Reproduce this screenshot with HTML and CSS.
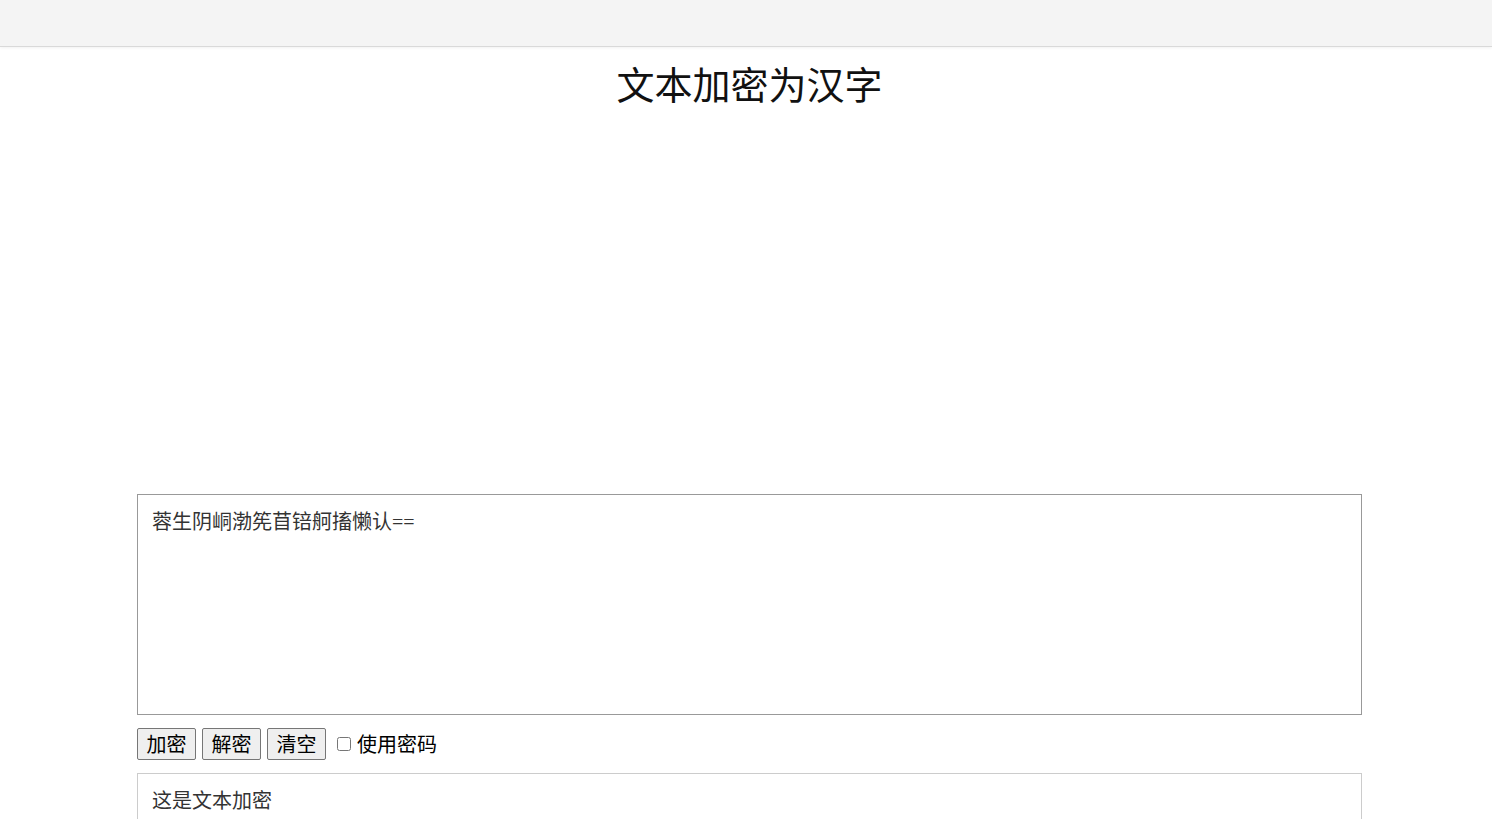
FILE: index.html
```html
<!DOCTYPE html>
<html lang="zh-CN">
<head>
<meta charset="utf-8">
<title>文本加密为汉字</title>
<link rel="stylesheet" href="styles.css">
</head>
<body>
<div class="topbar"></div>
<main class="page">
  <h1 class="title">文本加密为汉字</h1>
  <div class="ad-space"></div>
  <textarea class="input" spellcheck="false">蓉生阴峒渤筅苜锫舸搐懒认==</textarea>
  <div class="actions">
    <button class="btn" type="button">加密</button>
    <button class="btn" type="button">解密</button>
    <button class="btn" type="button">清空</button>
    <label class="pw"><input type="checkbox" class="pw-check">使用密码</label>
  </div>
  <div class="output">这是文本加密</div>
</main>
</body>
</html>
```

FILE: styles.css
```css
html, body {
  margin: 0;
  padding: 0;
  background: #fff;
}

body {
  font-family: "Noto Sans CJK SC", "Noto Sans", sans-serif;
  color: #111;
  overflow: hidden;
}

.topbar {
  height: 46px;
  background: #f4f4f4;
  border-bottom: 1px solid #d9d9d9;
  box-shadow: 0 1px 3px rgba(0, 0, 0, 0.06);
}

.page {
  width: 1225px;
  margin: 0 0 0 137px;
  display: flex;
  flex-direction: column;
}

.title {
  margin: 13px 0 0;
  font-size: 38px;
  font-weight: 400;
  line-height: 46px;
  text-align: center;
  color: #111;
}

.ad-space {
  height: 388px;
}

.input {
  box-sizing: border-box;
  width: 1225px;
  height: 221px;
  margin: 0;
  padding: 12px 14px;
  border: 1px solid #999;
  border-radius: 0;
  resize: none;
  outline: none;
  font-family: "Liberation Serif", "Noto Sans CJK SC", serif;
  font-size: 20px;
  line-height: 30px;
  color: #333;
  background: #fff;
}

.actions {
  display: flex;
  align-items: center;
  gap: 6px;
  margin-top: 13px;
  height: 32px;
}

.btn {
  box-sizing: border-box;
  height: 32px;
  width: 59px;
  padding: 0;
  border: 1px solid #767676;
  border-radius: 2px;
  background: #efefef;
  font-family: "Noto Sans CJK SC", sans-serif;
  font-size: 20px;
  line-height: 28px;
  color: #000;
}

.pw {
  display: flex;
  align-items: center;
  margin-left: 5px;
  font-size: 20px;
  line-height: 28px;
  color: #000;
}

.pw-check {
  width: 14px;
  height: 14px;
  margin: 0 6px 0 0;
}

.output {
  box-sizing: border-box;
  margin-top: 13px;
  min-height: 120px;
  padding: 12px 14px;
  border: 1px solid #ccc;
  font-family: "Liberation Serif", "Noto Sans CJK SC", serif;
  font-size: 20px;
  line-height: 30px;
  color: #333;
}
```
